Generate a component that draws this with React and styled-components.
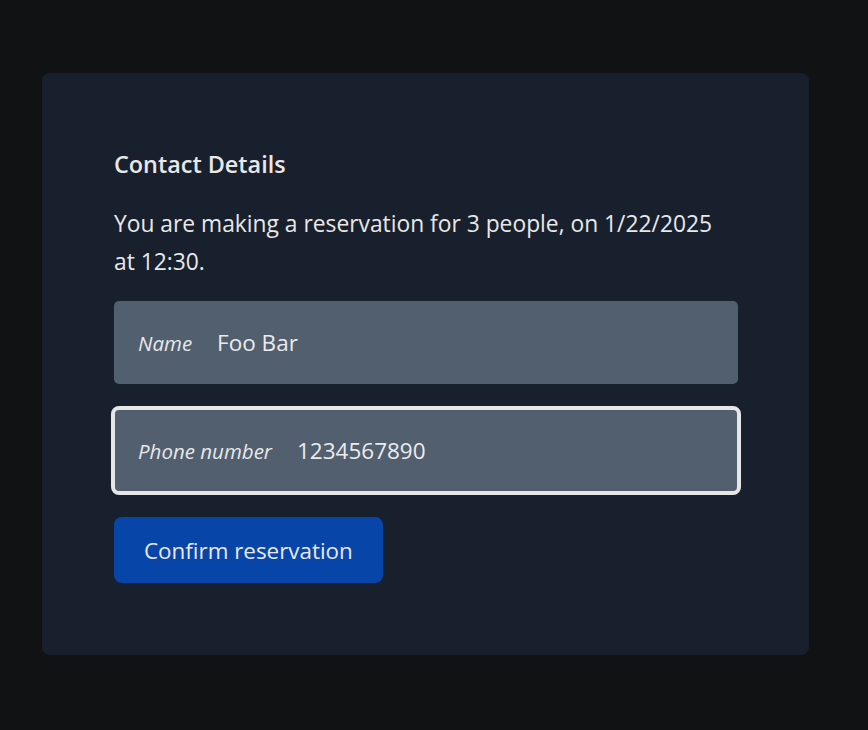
import React from "react";
import styled, { createGlobalStyle } from "styled-components";

const Global = createGlobalStyle`
  html, body { margin: 0; padding: 0; background: #111214; }
  body { font-family: "Open Sans", "Noto Sans", sans-serif; color: #e8e8e8; }
  * { box-sizing: border-box; }
`;

const Page = styled.div`
  padding: 73px 59px 74px 42px;
  min-height: 730px;
`;

const Card = styled.section`
  background: #19202d;
  border-radius: 8px;
  padding: 75px 72px 72px 72px;
  width: 767px;
`;

const Heading = styled.h2`
  margin: 0 0 25px 0;
  font-size: 23.4px;
  font-weight: 600;
  line-height: 32px;
`;

const Lead = styled.p`
  margin: 0 0 20px 0;
  font-size: 22.8px;
  line-height: 38px;
  max-width: 624px;
`;

const Form = styled.form`
  display: flex;
  flex-direction: column;
  gap: 25px;
  align-items: flex-start;
`;

const Field = styled.label`
  display: flex;
  align-items: center;
  gap: 25px;
  width: 624px;
  height: 83px;
  padding: 0 24px;
  background: #525f6f;
  border-radius: 5px;
  outline: ${(p) => (p.$focused ? "4px solid #e6e6e6" : "none")};
  outline-offset: -1px;
`;

const Label = styled.span`
  font-style: italic;
  font-size: 20.5px;
  color: #e8e8e8;
`;

const Value = styled.span`
  font-size: 22.5px;
  color: #ececec;
`;

const Button = styled.button`
  font-family: inherit;
  font-size: 22.4px;
  color: #e8e8e8;
  background: #0845a9;
  border: none;
  border-radius: 8px;
  height: 66px;
  padding: 0 30px;
`;

export default function App() {
  return (
    <>
      <Global />
      <Page>
        <Card>
          <Heading>Contact Details</Heading>
          <Lead>You are making a reservation for 3 people, on 1/22/2025 at 12:30.</Lead>
          <Form onSubmit={(e) => e.preventDefault()}>
            <Field>
              <Label>Name</Label>
              <Value>Foo Bar</Value>
            </Field>
            <Field $focused>
              <Label>Phone number</Label>
              <Value>1234567890</Value>
            </Field>
            <Button type="submit">Confirm reservation</Button>
          </Form>
        </Card>
      </Page>
    </>
  );
}
